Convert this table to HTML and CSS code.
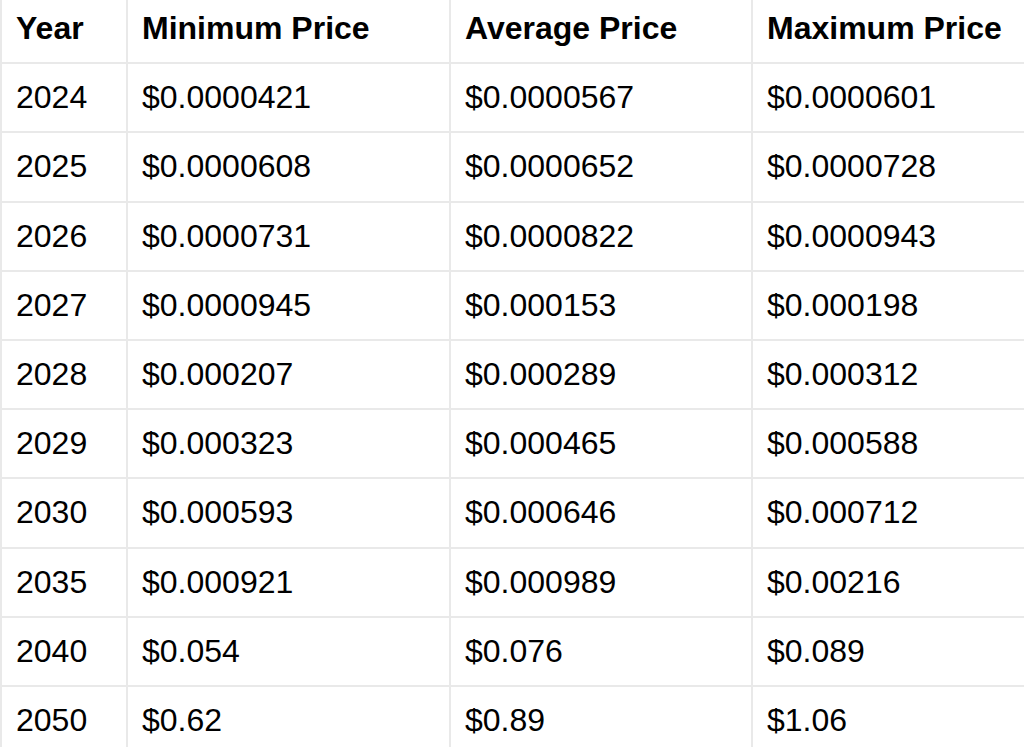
FILE: index.html
```html
<!DOCTYPE html>
<html lang="en">
<head>
<meta charset="utf-8">
<title>Price Prediction</title>
<link rel="stylesheet" href="styles.css">
</head>
<body>
<table class="price-table">
  <colgroup>
    <col class="col-year">
    <col class="col-min">
    <col class="col-avg">
    <col class="col-max">
  </colgroup>
  <thead>
    <tr><th>Year</th><th>Minimum Price</th><th>Average Price</th><th>Maximum Price</th></tr>
  </thead>
  <tbody>
    <tr><td>2024</td><td>$0.0000421</td><td>$0.0000567</td><td>$0.0000601</td></tr>
    <tr><td>2025</td><td>$0.0000608</td><td>$0.0000652</td><td>$0.0000728</td></tr>
    <tr><td>2026</td><td>$0.0000731</td><td>$0.0000822</td><td>$0.0000943</td></tr>
    <tr><td>2027</td><td>$0.0000945</td><td>$0.000153</td><td>$0.000198</td></tr>
    <tr><td>2028</td><td>$0.000207</td><td>$0.000289</td><td>$0.000312</td></tr>
    <tr><td>2029</td><td>$0.000323</td><td>$0.000465</td><td>$0.000588</td></tr>
    <tr><td>2030</td><td>$0.000593</td><td>$0.000646</td><td>$0.000712</td></tr>
    <tr><td>2035</td><td>$0.000921</td><td>$0.000989</td><td>$0.00216</td></tr>
    <tr><td>2040</td><td>$0.054</td><td>$0.076</td><td>$0.089</td></tr>
    <tr><td>2050</td><td>$0.62</td><td>$0.89</td><td>$1.06</td></tr>
  </tbody>
</table>
</body>
</html>
```

FILE: styles.css
```css
html, body {
  margin: 0;
  padding: 0;
  background: #ffffff;
  overflow: hidden;
}

body {
  width: 1024px;
  height: 747px;
  font-family: "Liberation Sans", Arial, Helvetica, sans-serif;
  color: #000000;
}

.price-table {
  border-collapse: collapse;
  table-layout: fixed;
  width: 1055px;
  margin-top: -7px;
  border: 2px solid #e9e9e9;
}

.col-year { width: 126px; }
.col-min { width: 323px; }
.col-avg { width: 302px; }
.col-max { width: 304px; }

.price-table th,
.price-table td {
  border: 2px solid #e9e9e9;
  padding: 0 14px;
  height: 67.2px;
  font-size: 32px;
  line-height: 37px;
  text-align: left;
  vertical-align: middle;
  white-space: nowrap;
}

.price-table th {
  font-weight: bold;
}

.price-table td {
  font-weight: normal;
}
```
